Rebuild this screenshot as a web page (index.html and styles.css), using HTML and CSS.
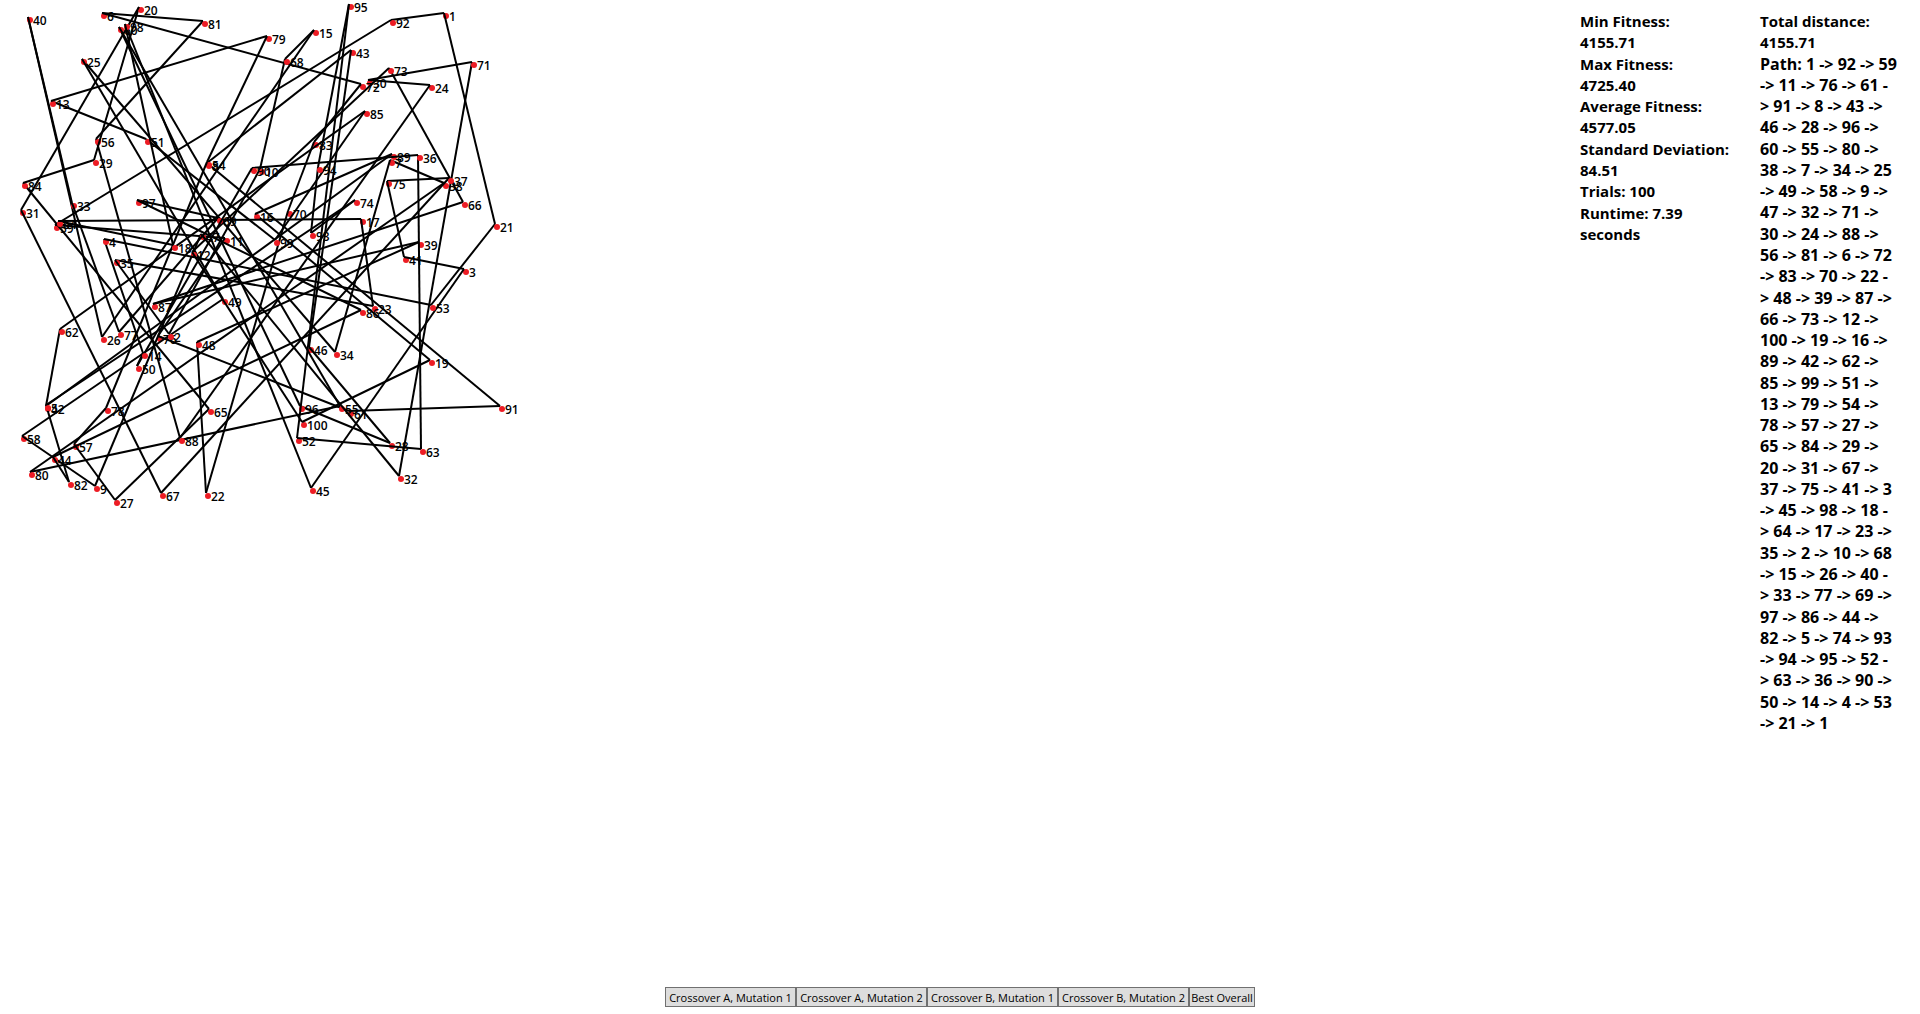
FILE: index.html
```html
<!DOCTYPE html>
<html lang="en">
<head>
<meta charset="utf-8">
<title>Travelling salesman: genetic algorithm</title>
<link rel="stylesheet" href="styles.css">
</head>
<body>
<main class="workspace">
  <section class="plot">
    <svg class="tour" id="tour" width="540" height="520" role="img" aria-label="Tour through 100 cities"></svg>
  </section>
  <section class="panel">Min Fitness:
4155.71
Max Fitness:
4725.40
Average Fitness:
4577.05
Standard Deviation:
84.51
Trials: 100
Runtime: 7.39
seconds</section>
  <section class="panel">Total distance:
4155.71<div class="path">Path: 1 -&gt; 92 -&gt; 59
-&gt; 11 -&gt; 76 -&gt; 61 -
&gt; 91 -&gt; 8 -&gt; 43 -&gt;
46 -&gt; 28 -&gt; 96 -&gt;
60 -&gt; 55 -&gt; 80 -&gt;
38 -&gt; 7 -&gt; 34 -&gt; 25
-&gt; 49 -&gt; 58 -&gt; 9 -&gt;
47 -&gt; 32 -&gt; 71 -&gt;
30 -&gt; 24 -&gt; 88 -&gt;
56 -&gt; 81 -&gt; 6 -&gt; 72
-&gt; 83 -&gt; 70 -&gt; 22 -
&gt; 48 -&gt; 39 -&gt; 87 -&gt;
66 -&gt; 73 -&gt; 12 -&gt;
100 -&gt; 19 -&gt; 16 -&gt;
89 -&gt; 42 -&gt; 62 -&gt;
85 -&gt; 99 -&gt; 51 -&gt;
13 -&gt; 79 -&gt; 54 -&gt;
78 -&gt; 57 -&gt; 27 -&gt;
65 -&gt; 84 -&gt; 29 -&gt;
20 -&gt; 31 -&gt; 67 -&gt;
37 -&gt; 75 -&gt; 41 -&gt; 3
-&gt; 45 -&gt; 98 -&gt; 18 -
&gt; 64 -&gt; 17 -&gt; 23 -&gt;
35 -&gt; 2 -&gt; 10 -&gt; 68
-&gt; 15 -&gt; 26 -&gt; 40 -
&gt; 33 -&gt; 77 -&gt; 69 -&gt;
97 -&gt; 86 -&gt; 44 -&gt;
82 -&gt; 5 -&gt; 74 -&gt; 93
-&gt; 94 -&gt; 95 -&gt; 52 -
&gt; 63 -&gt; 36 -&gt; 90 -&gt;
50 -&gt; 14 -&gt; 4 -&gt; 53
-&gt; 21 -&gt; 1</div></section>
</main>
<footer class="choices">
  <button type="button" class="choice">Crossover A, Mutation 1</button>
  <button type="button" class="choice">Crossover A, Mutation 2</button>
  <button type="button" class="choice">Crossover B, Mutation 1</button>
  <button type="button" class="choice">Crossover B, Mutation 2</button>
  <button type="button" class="choice choice-best">Best Overall</button>
</footer>
<script src="tour.js"></script>
</body>
</html>
```
FILE: styles.css
```css
* {
  box-sizing: border-box;
}

body {
  margin: 0;
  min-height: 100vh;
  display: flex;
  flex-direction: column;
  background: #fff;
  color: #000;
  font-family: "Open Sans", "Noto Sans", sans-serif;
}

.workspace {
  flex: 1;
  display: flex;
}

.plot {
  flex: 1;
  min-width: 0;
}

.tour {
  display: block;
}

.leg {
  stroke: #000;
  stroke-width: 2;
}

.city {
  fill: #ed1c24;
}

.city-name {
  font-size: 12px;
  font-weight: 600;
}

.panel {
  flex: none;
  width: 180px;
  padding: 11px 10px 11px 20px;
  font-size: 15px;
  font-weight: 700;
  line-height: 1.42;
  white-space: pre;
}

.path {
  font-size: 16px;
  line-height: 1.33;
}

.choices {
  display: flex;
  justify-content: center;
  padding-bottom: 7px;
}

.choice {
  width: 131px;
  height: 20px;
  padding: 1px 0 0;
  border: 1px solid #707070;
  border-radius: 0;
  background: #ddd;
  color: #000;
  font-family: inherit;
  font-size: 11px;
  line-height: 16px;
  white-space: nowrap;
}

.choice-best {
  width: 66px;
}
```
FILE: tour.js
```js
// City number -> centre of its dot.
const cities = {
  1: [446, 16], 2: [171, 337], 3: [466, 272], 4: [106, 242], 5: [48, 408],
  6: [104, 16], 7: [392, 163], 8: [209, 166], 9: [97, 489], 10: [262, 172],
  11: [227, 241], 12: [194, 255], 13: [53, 104], 14: [145, 356], 15: [316, 33],
  16: [257, 217], 17: [363, 222], 18: [175, 248], 19: [432, 363], 20: [141, 10],
  21: [497, 227], 22: [208, 496], 23: [375, 309], 24: [432, 88], 25: [84, 62],
  26: [104, 340], 27: [117, 503], 28: [392, 446], 29: [96, 163], 30: [370, 83],
  31: [23, 213], 32: [401, 479], 33: [74, 206], 34: [337, 355], 35: [117, 263],
  36: [420, 158], 37: [451, 181], 38: [446, 186], 39: [421, 245], 40: [30, 20],
  41: [406, 260], 42: [48, 409], 43: [353, 53], 44: [55, 460], 45: [313, 491],
  46: [311, 350], 47: [203, 237], 48: [199, 345], 49: [225, 302], 50: [139, 369],
  51: [148, 142], 52: [299, 441], 53: [433, 308], 54: [209, 165], 55: [342, 409],
  56: [98, 142], 57: [76, 447], 58: [24, 439], 59: [57, 228], 60: [121, 30],
  61: [351, 414], 62: [62, 332], 63: [423, 452], 64: [60, 224], 65: [211, 412],
  66: [465, 205], 67: [163, 496], 68: [287, 62], 69: [220, 221], 70: [290, 214],
  71: [474, 65], 72: [363, 87], 73: [391, 71], 74: [357, 203], 75: [389, 184],
  76: [160, 339], 77: [121, 335], 78: [108, 411], 79: [269, 39], 80: [32, 475],
  81: [205, 24], 82: [71, 485], 83: [316, 145], 84: [25, 186], 85: [367, 114],
  86: [363, 313], 87: [155, 307], 88: [182, 441], 89: [394, 157], 90: [254, 171],
  91: [502, 409], 92: [393, 23], 93: [313, 236], 94: [320, 170], 95: [351, 7],
  96: [302, 409], 97: [139, 203], 98: [127, 27], 99: [277, 243], 100: [304, 425]
};

const path = [
  1, 92, 59, 11, 76, 61, 91, 8, 43, 46, 28, 96, 60, 55, 80, 38, 7, 34, 25, 49,
  58, 9, 47, 32, 71, 30, 24, 88, 56, 81, 6, 72, 83, 70, 22, 48, 39, 87, 66, 73,
  12, 100, 19, 16, 89, 42, 62, 85, 99, 51, 13, 79, 54, 78, 57, 27, 65, 84, 29,
  20, 31, 67, 37, 75, 41, 3, 45, 98, 18, 64, 17, 23, 35, 2, 10, 68, 15, 26, 40,
  33, 77, 69, 97, 86, 44, 82, 5, 74, 93, 94, 95, 52, 63, 36, 90, 50, 14, 4, 53,
  21, 1
];

const tour = document.getElementById("tour");

function add(name, attributes, text) {
  const node = document.createElementNS("http://www.w3.org/2000/svg", name);
  for (const key in attributes) node.setAttribute(key, attributes[key]);
  if (text) node.textContent = text;
  tour.appendChild(node);
}

// Legs join the upper left corners of the dots.
const cornerX = 2;
const cornerY = 3;

for (let i = 0; i < path.length - 1; i++) {
  const [x, y] = cities[path[i]];
  const [nextX, nextY] = cities[path[i + 1]];
  add("circle", { class: "city", cx: x, cy: y, r: 3 });
  add("text", { class: "city-name", x: x + 3, y: y + 5 }, String(path[i]));
  add("line", {
    class: "leg",
    x1: x - cornerX, y1: y - cornerY,
    x2: nextX - cornerX, y2: nextY - cornerY
  });
}
```
